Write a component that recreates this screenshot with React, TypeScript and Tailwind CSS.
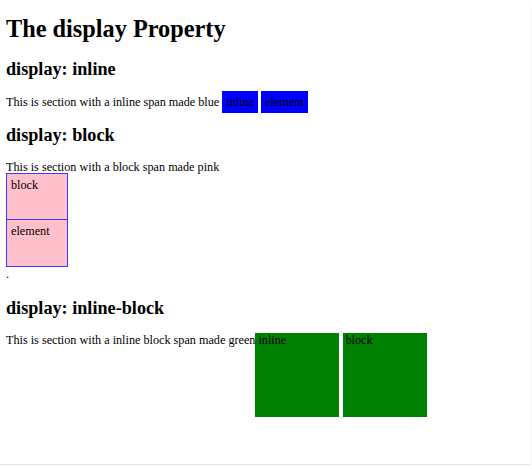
export default function App() {
  return (
    <div className="bg-white">
      <div className="w-[530px] h-[465px] bg-white border-b border-[#e6e6e6] shadow-[0_1px_2px_rgba(0,0,0,0.08)] text-black text-[12.2px] leading-[normal] font-['Liberation_Serif',serif] px-[6px] pt-px">
        <h1 className="text-[24.3px] font-bold mt-[14px] mb-[16px]">The display Property</h1>

        {/* inline */}
        <h2 className="text-[18.2px] font-bold mt-[15px] mb-[15px]">display: inline</h2>
        <p className="my-[12px]">
          This is section with a inline span made blue{" "}
          <span className="bg-[#0000ff] px-[4px] py-[4px]">inline</span>{" "}
          <span className="bg-[#0000ff] px-[4px] py-[4px]">element</span>
        </p>

        {/* block */}
        <h2 className="text-[18.2px] font-bold mt-[15px] mb-[15px]">display: block</h2>
        <div className="leading-[12px]">
          This is section with a block span made pink
          <span className="block w-[62px] h-[47px] bg-[#ffc0cb] border border-[#3b3bff] px-[4px] pt-[4px] leading-[normal]">block</span>
          <span className="block w-[62px] h-[48px] bg-[#ffc0cb] border border-[#3b3bff] px-[4px] pt-[4px] leading-[normal] -mt-px">element</span>
          <span className="block leading-[normal]">.</span>
        </div>

        {/* inline-block */}
        <h2 className="text-[18.2px] font-bold mt-[16px] mb-[14px]">display: inline-block</h2>
        <p className="my-[12px]">
          This is section with a inline block span made green
          <span className="inline-block w-[84px] h-[84px] bg-[#008000] px-[3px] align-baseline">inline</span>{" "}
          <span className="inline-block w-[84px] h-[84px] bg-[#008000] px-[3px] align-baseline">block</span>
        </p>
      </div>
    </div>
  );
}
